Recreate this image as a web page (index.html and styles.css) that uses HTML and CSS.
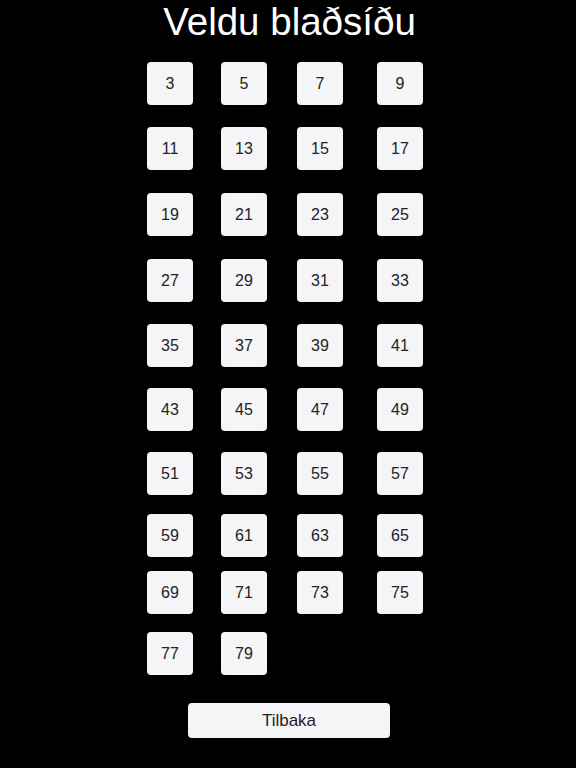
FILE: index.html
```html
<!DOCTYPE html>
<html lang="is">
<head>
<meta charset="utf-8">
<title>Veldu blaðsíðu</title>
<link rel="stylesheet" href="styles.css">
</head>
<body>
<main class="page">
  <h1 class="title">Veldu blaðsíðu</h1>
  <div class="grid">
    <button class="cell">3</button><button class="cell">5</button><button class="cell">7</button><button class="cell">9</button>
    <button class="cell">11</button><button class="cell">13</button><button class="cell">15</button><button class="cell">17</button>
    <button class="cell">19</button><button class="cell">21</button><button class="cell">23</button><button class="cell">25</button>
    <button class="cell">27</button><button class="cell">29</button><button class="cell">31</button><button class="cell">33</button>
    <button class="cell">35</button><button class="cell">37</button><button class="cell">39</button><button class="cell">41</button>
    <button class="cell">43</button><button class="cell">45</button><button class="cell">47</button><button class="cell">49</button>
    <button class="cell">51</button><button class="cell">53</button><button class="cell">55</button><button class="cell">57</button>
    <button class="cell">59</button><button class="cell">61</button><button class="cell">63</button><button class="cell">65</button>
    <button class="cell">69</button><button class="cell">71</button><button class="cell">73</button><button class="cell">75</button>
    <button class="cell">77</button><button class="cell">79</button>
  </div>
  <button class="back">Tilbaka</button>
</main>
</body>
</html>
```

FILE: styles.css
```css
html, body {
  margin: 0;
  padding: 0;
  background: #000;
}

body {
  width: 576px;
  height: 768px;
  overflow: hidden;
  font-family: "Liberation Sans", Arial, sans-serif;
}

.page {
  display: flex;
  flex-direction: column;
}

.title {
  margin: 0;
  height: 44px;
  line-height: 44px;
  font-size: 38.5px;
  font-weight: normal;
  color: #fff;
  text-align: center;
  padding-left: 3px;
}

.grid {
  display: grid;
  grid-template-columns: 74px 76px 80px 46px;
  grid-template-rows: 65px 66px 66px 65px 64px 64px 62px 57px 61px 43px;
  margin: 18px 0 0 147px;
}

.cell,
.back {
  border: none;
  padding: 0;
  margin: 0;
  background: #f5f4f7;
  color: #232323;
  font-family: "Liberation Sans", Arial, sans-serif;
  border-radius: 4px;
  cursor: pointer;
}

.cell {
  width: 46px;
  height: 43px;
  font-size: 16px;
  align-self: start;
}

.back {
  align-self: flex-start;
  margin: 28px 0 0 188px;
  width: 202px;
  height: 35px;
  font-size: 17px;
}
```
